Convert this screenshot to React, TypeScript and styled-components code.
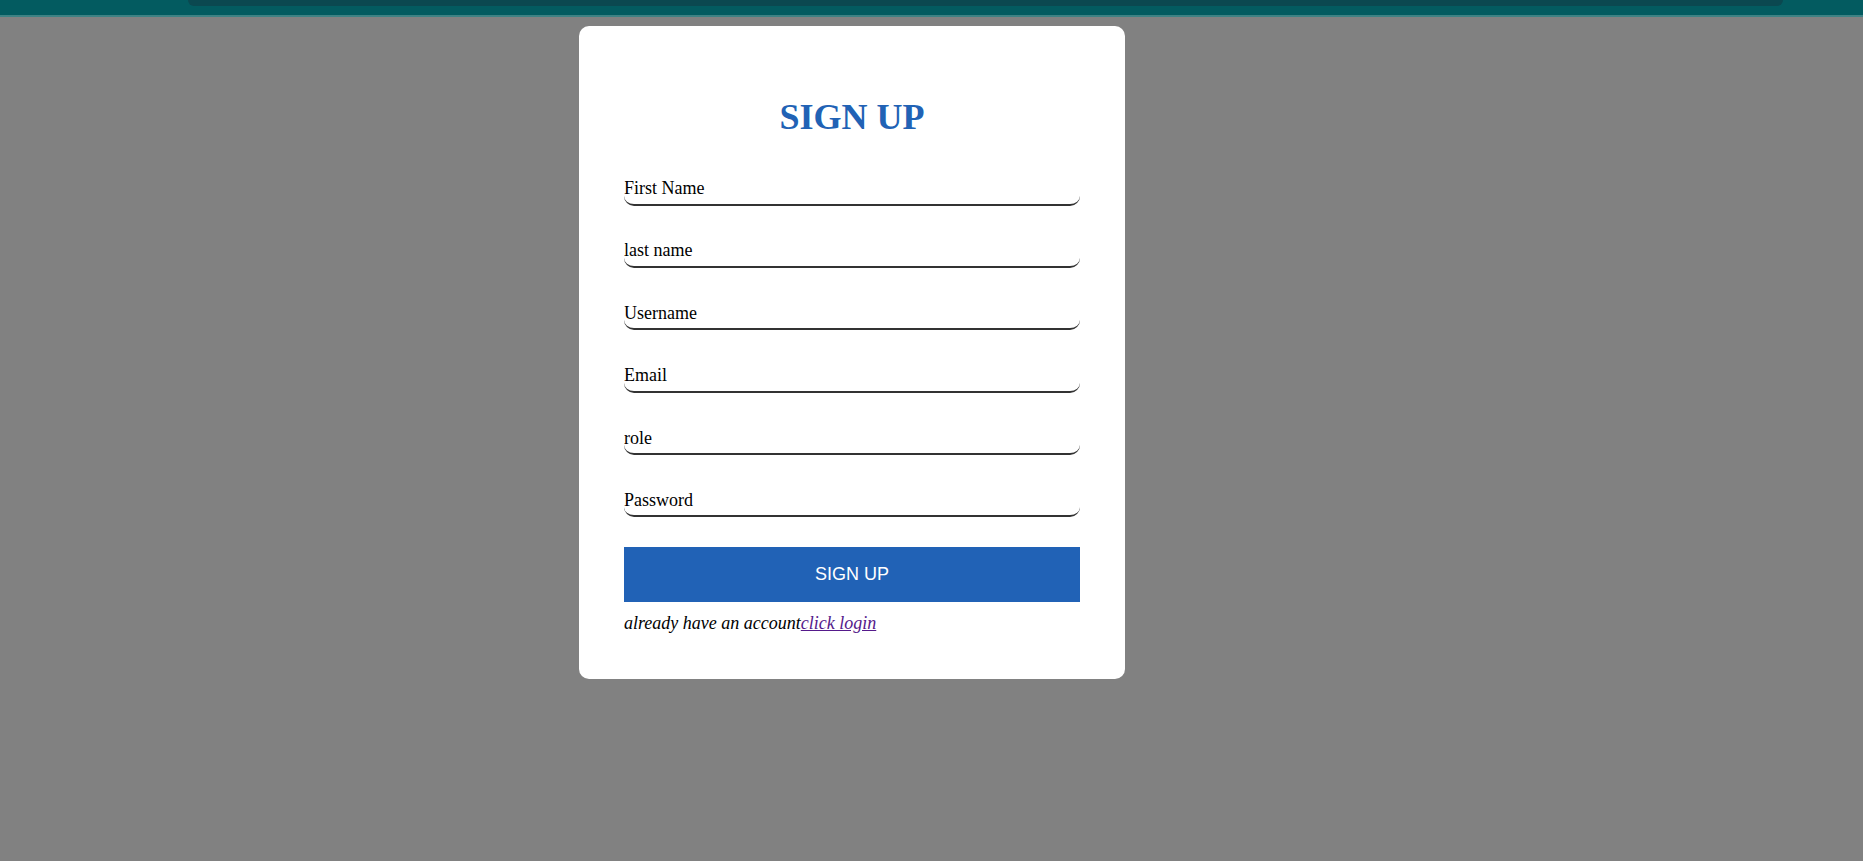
import React from "react";
import styled, { createGlobalStyle } from "styled-components";

const GlobalStyle = createGlobalStyle`
  html, body {
    margin: 0;
    padding: 0;
    background: #818181;
  }
  body {
    font-family: "Liberation Serif", "Times New Roman", serif;
    min-height: 100vh;
  }
`;

const TopBar = styled.header`
  height: 15px;
  background: #035b60;
  border-bottom: 2px solid #3e8284;
  padding: 0 80px 0 188px;
`;

const TopBarInner = styled.div`
  height: 6px;
  background: #0b4850;
  border-radius: 0 0 12px 12px;
`;

const Page = styled.main`
  display: flex;
  align-items: flex-start;
  padding: 9px 0 0 579px;
`;

const Card = styled.form`
  width: 546px;
  box-sizing: border-box;
  background: #ffffff;
  border-radius: 10px;
  padding: 70px 45px 45px;
  display: flex;
  flex-direction: column;
`;

const Title = styled.h1`
  margin: 0 0 35.5px;
  text-align: center;
  font-size: 36px;
  font-weight: bold;
  color: #2162b5;
  line-height: normal;
`;

const Fields = styled.div`
  display: flex;
  flex-direction: column;
  gap: 30.4px;
`;

const Field = styled.input`
  display: block;
  width: 100%;
  height: 32px;
  box-sizing: border-box;
  padding: 0;
  margin: 0;
  border: none;
  border-bottom: 2px solid #333333;
  border-radius: 10px;
  outline: none;
  background: transparent;
  font-family: "Liberation Serif", "Times New Roman", serif;
  font-size: 18px;
  color: #000000;

  &::placeholder {
    color: #000000;
    opacity: 1;
  }
`;

const SubmitButton = styled.button`
  margin-top: 30px;
  height: 55px;
  width: 100%;
  border: none;
  background: #2162b6;
  color: #ffffff;
  font-family: "Liberation Sans", Arial, sans-serif;
  font-size: 18px;
  cursor: pointer;
`;

const Footer = styled.p`
  margin: 11px 0 0;
  font-size: 18px;
  font-style: italic;
  color: #000000;

  a {
    color: #551a8b;
    text-decoration: underline;
  }
`;

const fields = [
  { name: "firstName", placeholder: "First Name", type: "text" },
  { name: "lastName", placeholder: "last name", type: "text" },
  { name: "username", placeholder: "Username", type: "text" },
  { name: "email", placeholder: "Email", type: "email" },
  { name: "role", placeholder: "role", type: "text" },
  { name: "password", placeholder: "Password", type: "password" },
];

export default function App() {
  return (
    <>
      <GlobalStyle />
      <TopBar>
        <TopBarInner />
      </TopBar>
      <Page>
        <Card onSubmit={(e) => e.preventDefault()}>
          <Title>SIGN UP</Title>
          <Fields>
            {fields.map((f) => (
              <Field key={f.name} name={f.name} type={f.type} placeholder={f.placeholder} />
            ))}
          </Fields>
          <SubmitButton type="submit">SIGN UP</SubmitButton>
          <Footer>
            already have an account<a href="#login">click login</a>
          </Footer>
        </Card>
      </Page>
    </>
  );
}
